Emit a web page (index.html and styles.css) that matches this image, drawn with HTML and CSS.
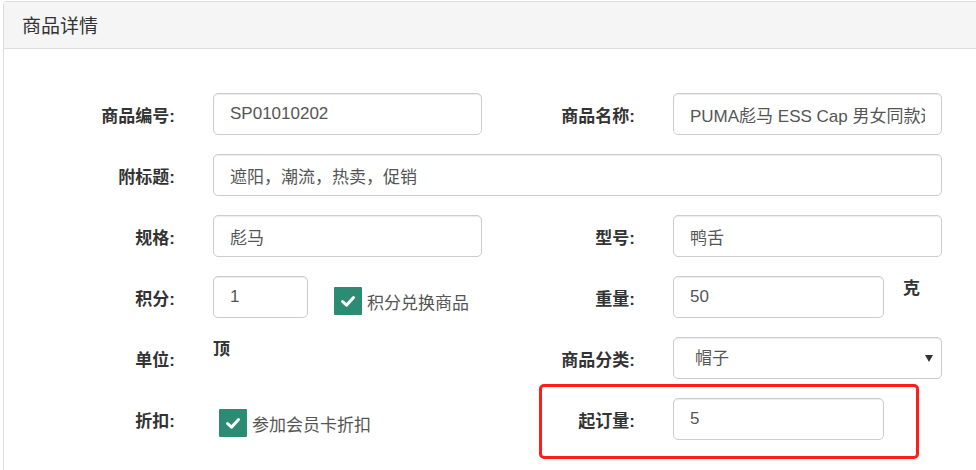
FILE: index.html
```html
<!DOCTYPE html>
<html lang="zh-CN">
<head>
  <meta charset="UTF-8" />
  <title>商品详情</title>
  <link rel="stylesheet" href="styles.css">
</head>
<body>

  <div class="panel">
    <div class="panel-heading">商品详情</div>
    <div class="panel-body">
      <form class="form">
        <label class="label">商品编号:</label>
        <div class="field"><input type="text" class="input" value="SP01010202" /></div>
        <label class="label">商品名称:</label>
        <div class="field"><input type="text" class="input" value="PUMA彪马 ESS Cap 男女同款运动帽" /></div>

        <label class="label">附标题:</label>
        <div class="field field-wide"><input type="text" class="input" value="遮阳，潮流，热卖，促销" /></div>

        <label class="label">规格:</label>
        <div class="field"><input type="text" class="input" value="彪马" /></div>
        <label class="label">型号:</label>
        <div class="field"><input type="text" class="input" value="鸭舌" /></div>

        <label class="label">积分:</label>
        <div class="field field-inline">
          <input type="text" class="input input-xs" value="1" />
          <span class="check check-points"><span class="box"><svg viewBox="0 0 28 28" width="28" height="28"><path d="M8.5 14.5 L12.5 18.2 L19.5 10.5" fill="none" stroke="#fff" stroke-width="3" stroke-linecap="round" stroke-linejoin="round"/></svg></span>积分兑换商品</span>
        </div>
        <label class="label">重量:</label>
        <div class="field field-inline">
          <input type="text" class="input input-md" value="50" />
          <span class="unit unit-g">克</span>
        </div>

        <label class="label">单位:</label>
        <div class="field"><span class="unit">顶</span></div>
        <label class="label">商品分类:</label>
        <div class="field select-wrap">
          <select class="input select">
            <option>帽子</option>
          </select>
        </div>

        <label class="label">折扣:</label>
        <div class="field">
          <span class="check check-discount"><span class="box"><svg viewBox="0 0 28 28" width="28" height="28"><path d="M8.5 14.5 L12.5 18.2 L19.5 10.5" fill="none" stroke="#fff" stroke-width="3" stroke-linecap="round" stroke-linejoin="round"/></svg></span>参加会员卡折扣</span>
        </div>
        <label class="label">起订量:</label>
        <div class="field mark-wrap">
          <input type="text" class="input input-md" value="5" />
          <div class="mark"></div>
        </div>
      </form>
    </div>
  </div>

</body>
</html>
```

FILE: styles.css
```css
html, body {
  margin: 0;
  overflow: hidden;
}
body {
  font-family: "Liberation Sans", Arial, "Noto Sans CJK SC", sans-serif;
  font-size: 17px;
  color: #333;
  background: #fff;
  padding: 1px 0 0 3px;
}
.panel {
  width: 990px;
  height: 480px;
  border: 1px solid #ddd;
  border-right: none;
  border-radius: 4px 0 0 0;
}
.panel-heading {
  height: 47px;
  line-height: 42px;
  padding: 4px 18px 0;
  box-sizing: border-box;
  background: #f5f5f5;
  border-bottom: 1px solid #ddd;
  font-size: 19px;
  color: #333;
}
.panel-body {
  padding: 44px 0 0 0;
}
.form {
  display: grid;
  grid-template-columns: 171px 269px 115px 269px;
  grid-auto-rows: 42px;
  column-gap: 38px;
  row-gap: 19px;
  margin: 0;
}
.label {
  font-weight: bold;
  text-align: right;
  align-self: center;
  color: #333;
}
.field {
  position: relative;
  min-width: 0;
}
.field-wide {
  grid-column: 2 / 5;
}
.field-inline {
  display: flex;
  align-items: flex-start;
}
.input {
  display: block;
  width: 100%;
  height: 42px;
  box-sizing: border-box;
  padding: 0 16px;
  border: 1px solid #ccc;
  border-radius: 5px;
  font-family: inherit;
  font-size: 17px;
  color: #555;
  background: #fff;
  box-shadow: inset 0 1px 1px rgba(0,0,0,.075);
}
.input-xs { width: 95px; flex: none; }
.input-md { width: 211px; flex: none; }
.check {
  display: inline-flex;
  align-items: center;
  gap: 5px;
  color: #555;
  white-space: nowrap;
}
.check-points {
  margin: 11px 0 0 26px;
}
.check-discount {
  margin: 11px 0 0 6px;
}
.box {
  display: block;
  width: 28px;
  height: 28px;
  background: #2b8c73;
  border-radius: 1px;
}
.box svg { display: block; }
.unit {
  display: block;
  font-weight: bold;
  padding-top: 1px;
  line-height: 24px;
}
.unit-g {
  margin-left: 19px;
}
.select {
  appearance: none;
  -webkit-appearance: none;
  padding-left: 21px;
}
.select-wrap::after {
  content: "";
  position: absolute;
  right: 9px;
  top: 18px;
  border-left: 4px solid transparent;
  border-right: 4px solid transparent;
  border-top: 7px solid #333;
}
.mark {
  position: absolute;
  left: -134px;
  top: -14px;
  width: 374px;
  height: 69px;
  border: 3px solid #ff1c1c;
  border-radius: 5px;
  pointer-events: none;
}
```
